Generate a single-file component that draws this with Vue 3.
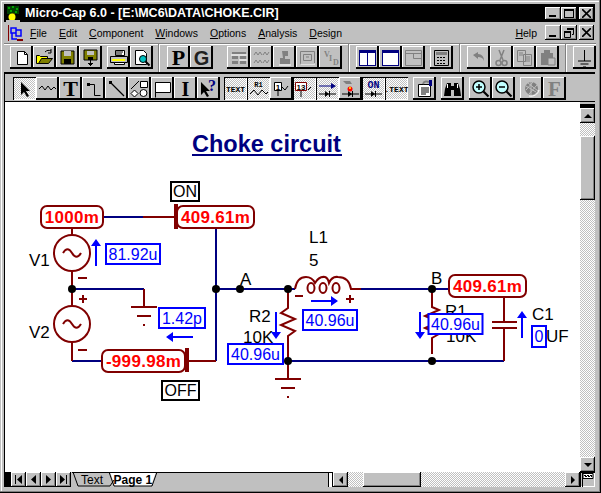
<script setup>
const k = '#000', g = '#808080', w = '#fff', ol = '#808000', nv = '#000080'
const ser = `font-family="Liberation Serif" font-weight="bold"`
const san = `font-family="Liberation Sans" font-weight="bold"`
const floppy = (c) => `<path d="M5 5h13v13H5z" fill="${c}" stroke="${k}"/><path d="M8 5h7v5H8z" fill="#c0c0c0"/><path d="M8 13h7v5H8z" fill="${k}"/>`
const floppy2 = `<path d="M5 4h13v10H5z" fill="${ol}" stroke="${k}"/><path d="M8 5h7v4H8z" fill="#c0c0c0"/><path d="M9 11h5v3H9z" fill="${k}"/><path d="M11 14h1v3h-1zM9 17h5v1H9zM10 18h3v1h-3zM11 19h1v1h-1z" fill="${k}"/>`
const row1 = [
  [{ i: `<path d="M7.5 5.5h7l3 3v10h-10z" fill="${w}" stroke="${k}"/><path d="M14.5 5.5v3h3" fill="none" stroke="${k}"/>` },
   { i: `<path d="M3.5 9.5h3l1 1h7v7h-11z" fill="#ffff00" stroke="${k}"/><path d="M5.5 17.5l3-5h11l-4 5z" fill="${ol}" stroke="${k}"/><path d="M12 6c2-2 4-2 6-1" fill="none" stroke="${k}"/><path d="M18 3v4h-3" fill="none" stroke="${k}"/>` },
   { i: floppy(ol) }, { i: floppy2 }],
  [{ i: `<path d="M8.5 4.5h9v5h-9z" fill="${w}" stroke="${k}"/><path d="M3.5 10.5h17v6h-17z" fill="#c0c0c0" stroke="${k}"/><path d="M5 13h13v2H5z" fill="#ffff00"/><path d="M7.5 16.5h10v2h-10z" fill="${w}" stroke="${k}"/><path d="M9 6h7M8 8h7" stroke="${k}"/>` },
   { i: `<path d="M5.5 4.5h8l3 3v11h-11z" fill="${w}" stroke="${k}"/><circle cx="13" cy="13" r="3.5" fill="#00c0c0" stroke="${k}"/><path d="M15.5 15.5l4 4" stroke="${k}" stroke-width="2"/>` }],
  [{ i: `<text x="11.5" y="19" text-anchor="middle" font-size="22" ${ser} fill="${k}">P</text>` },
   { i: `<text x="11.5" y="18.5" text-anchor="middle" font-size="20" ${san} fill="#202020">G</text>` }],
  [{ i: `<path d="M5 6h14v2H5zM5 10h6v3H5zM13 10h6v3h-6zM5 15h6v3H5zM13 15h6v3h-6z" fill="${g}"/><path d="M4 9h16M12 14h8" stroke="${w}"/>` },
   { i: `<path d="M4 9l2-3 2 3 2-3 2 3M13 9l2-3 2 3 2-3M4 17l2-3 2 3 2-3 2 3M13 17l2-3 2 3 2-3" fill="none" stroke="${g}"/>` },
   { i: `<path d="M9 5h6v5h-3v3h5v5H7v-6h3z" fill="${g}"/><path d="M6 19h12" stroke="${w}"/>` },
   { i: `<path d="M4.5 5.5h14v12h-14zM7.5 8.5h8v6h-8z" fill="none" stroke="${g}"/><path d="M10 11h3" stroke="${g}"/><path d="M5 18h14" stroke="${w}"/>` },
   { i: `<text x="5" y="11" font-size="8" ${ser} fill="${g}">V</text><text x="10" y="15" font-size="8" ${ser} fill="${g}">I</text><text x="14" y="19" font-size="8" ${ser} fill="${g}">D</text>` }],
  [{ i: `<path d="M3.5 4.5h16v15h-16z" fill="${w}" stroke="${nv}"/><path d="M3 4h17v3H3z" fill="${nv}"/><path d="M11 4h1v16h-1zM3 4h1v16H3zM19 4h1v16h-1zM3 19h17v1H3z" fill="${nv}"/>` },
   { i: `<path d="M3.5 4.5h16v15h-16z" fill="${w}" stroke="${nv}"/><path d="M3 4h17v3H3zM3 4h1v16H3zM19 4h1v16h-1zM3 19h17v1H3z" fill="${nv}"/>` },
   { i: `<path d="M3.5 4.5h16v15h-16zM3.5 7.5h16M11.5 7.5v5h8" fill="none" stroke="${g}"/>` }],
  [{ i: `<path d="M4.5 4.5h14v15h-14z" fill="#c0c0c0" stroke="${k}"/><path d="M6 6h11v3H6z" fill="${g}"/><path d="M7 11h2v1H7zM10 11h2v1h-2zM13 11h2v1h-2zM7 14h2v1H7zM10 14h2v1h-2zM13 14h2v1h-2zM7 17h2v1H7zM10 17h2v1h-2zM13 17h2v1h-2z" fill="${k}"/>` }],
  [{ i: `<path d="M6 9l5-3v2c4 0 6 3 6 7-1-3-3-4-6-4v2z" fill="${g}"/>` },
   { i: `<circle cx="8.5" cy="17" r="2.5" fill="none" stroke="${g}" stroke-width="1.5"/><circle cx="14.5" cy="17" r="2.5" fill="none" stroke="${g}" stroke-width="1.5"/><path d="M9 4l4 10M14 4l-4 10" stroke="${g}" stroke-width="1.5"/>` },
   { i: `<path d="M4.5 4.5h8v11h-8zM10.5 8.5h8v11h-8z" fill="#c0c0c0" stroke="${g}"/><path d="M12 11h5M12 13h5M12 15h5M6 7h4M6 9h4" stroke="${g}"/>` },
   { i: `<path d="M5 7h12v12H5z" fill="${g}"/><path d="M8 4h6v3H8z" fill="${g}"/><path d="M12 12h7v7h-7z" fill="#c0c0c0" stroke="${g}"/>` }],
  [{ i: `<path d="M11.5 4v11M5 15h13M7.5 18h8M10 21h3" stroke="${k}" stroke-width="1" fill="none"/>` }],
]
const row2 = [
  [{ p: 1, i: `<path d="M8 5v13l3-3 3 5 2-1-3-5h4z" fill="${k}"/>` },
   { i: `<path d="M3 12l3-3 3 4 3-4 3 4 3-3 2 2" fill="none" stroke="${k}"/>` },
   { i: `<text x="11.5" y="19" text-anchor="middle" font-size="22" ${ser} fill="${k}">T</text>` },
   { i: `<path d="M5 6h3v3H5z" fill="${k}"/><path d="M8 7.5h4.500v11h6" fill="none" stroke="${k}" stroke-width="1"/>` },
   { i: `<path d="M4 4h3v3H4z" fill="${k}"/><path d="M6 6l13 13" stroke="${k}" stroke-width="1.2"/>` },
   { i: `<path d="M3 12l8-8" stroke="${k}"/><path d="M12.500 4.500h7v6h-7z" fill="${w}" stroke="${k}"/><circle cx="15.500" cy="16" r="3.500" fill="${w}" stroke="${k}"/><path d="M6.500 13l3.500 3.500-3.500 3.500-3.500-3.500z" fill="${w}" stroke="${k}"/>` },
   { i: `<path d="M4.500 5.500h15v10h-15z" fill="${w}" stroke="${k}"/><path d="M4.500 5.500v15" stroke="${k}"/>` },
   { i: `<text x="11.500" y="19" text-anchor="middle" font-size="20" ${ser} fill="${k}">I</text>` },
   { i: `<path d="M4 5v13l3-3 3 5 2-1-3-5h4z" fill="${k}"/><text x="11" y="14" font-size="16" ${ser} fill="${nv}">?</text>` }],
  [{ p: 1, i: `<text x="11.500" y="15" text-anchor="middle" font-size="8" font-family="Liberation Mono" font-weight="bold" fill="${k}">TEXT</text>` },
   { p: 1, i: `<text x="11.500" y="10" text-anchor="middle" font-size="7" font-family="Liberation Mono" font-weight="bold" fill="${k}">R1</text><path d="M3 17l4-4 4 5 4-5 4 4 2-2" fill="none" stroke="${k}"/>` },
   { i: `<path d="M4.500 5.500h7v8h-7z" fill="${w}" stroke="${k}"/><text x="8" y="12.500" text-anchor="middle" font-size="8" ${san} fill="${k}">1</text><path d="M8 13v6M12 10l3 3 3-4" fill="none" stroke="${k}"/>` },
   { p: 1, i: `<path d="M2.500 5.500h11v8h-11z" fill="${w}" stroke="#800000"/><text x="8" y="12.500" text-anchor="middle" font-size="8" ${san} fill="${k}">13</text><path d="M8 14v6M15 13l3-3" fill="none" stroke="${k}"/>` },
   { p: 1, i: `<path d="M3 9h13" stroke="${nv}"/><path d="M15 6l5 3-5 3z" fill="${nv}"/><path d="M3 17h17" stroke="${k}"/><path d="M9 14l4 3-4 3zM13 14h1v6h-1z" fill="${k}"/>` },
   { i: `<path d="M4 4h7l2 3H7z" fill="${g}"/><circle cx="11" cy="12" r="2.500" fill="#ff0000"/><circle cx="11" cy="11" r="1" fill="#ffff00"/><path d="M3 17h17" stroke="${k}"/><path d="M9 14l4 3-4 3zM13 14h1v6h-1z" fill="${k}"/>` },
   { p: 1, i: `<text x="11.500" y="11" text-anchor="middle" font-size="10" font-family="Liberation Mono" font-weight="bold" fill="${nv}">ON</text><path d="M3 17h17" stroke="${k}"/><path d="M9 14l4 3-4 3zM13 14h1v6h-1z" fill="${k}"/>` },
   { p: 1, i: `<text x="11.500" y="15" text-anchor="middle" font-size="8" font-family="Liberation Mono" font-weight="bold" fill="${k}">.TEXT</text>` }],
  [{ i: `<path d="M5.500 7.500h12v12h-12z" fill="${w}" stroke="${k}"/><path d="M8 11h8M8 13h8M8 15h8M8 17h5" stroke="${k}"/><path d="M10 7c1-3 4-3 6-2" fill="none" stroke="${g}" stroke-width="2"/><path d="M16 3h3v6h-3z" fill="${nv}"/>` }],
  [{ i: `<path d="M4 12l2-6h4v13H3zM19 12l-2-6h-4v13h7z" fill="${k}"/><path d="M10 9h3v4h-3z" fill="${k}"/><path d="M6 7h1v4H6zM16 7h1v4h-1z" fill="${w}"/>` }],
  [{ i: `<circle cx="10" cy="10" r="6" fill="#c0ffff" stroke="${k}" stroke-width="1.500"/><path d="M7 10h6M10 7v6" stroke="${k}" stroke-width="1.500"/><path d="M14.500 14.500l5 5" stroke="${k}" stroke-width="2.200"/>` },
   { i: `<circle cx="10" cy="10" r="6" fill="#c0ffff" stroke="${k}" stroke-width="1.500"/><path d="M7 10h6" stroke="${k}" stroke-width="1.500"/><path d="M14.500 14.500l5 5" stroke="${k}" stroke-width="2.200"/>` }],
  [{ i: `<circle cx="11.500" cy="11.500" r="6.500" fill="${g}"/><path d="M6 9l10 6M8 6l10 8M11 5v13M6 13l7-8M9 17l8-9" stroke="#c0c0c0"/><path d="M9 19c5 1 9-2 10-6" fill="none" stroke="${w}"/>` },
   { i: `<text x="11.500" y="19" text-anchor="middle" font-size="21" ${ser} fill="${g}">F</text>` }],
]
</script>

<template>
  <div class="window">
    <header class="titlebar">
      <svg class="appicon" width="16" height="17" viewBox="0 0 16 17">
        <path d="M2 1h12v8H2z" fill="#004000" />
        <path d="M3 2h2v2H3zM7 1h2v2H7zM11 3h2v2h-2zM5 5h2v2H5zM10 6h2v2h-2z" fill="#00a000" />
        <path d="M7 8h3v8H7z" fill="#404000" />
        <circle cx="7" cy="12" r="3.500" fill="#ffff00" />
        <path d="M1 15h14v2H1z" fill="#c0c0c0" />
      </svg>
      <span class="apptitle">Micro-Cap 6.0 - [E:\MC6\DATA\CHOKE.CIR]</span>
      <div class="capbtns">
        <button class="cap"><i class="minglyph"></i></button>
        <button class="cap"><i class="maxglyph"></i></button>
        <button class="cap close"><svg width="9" height="9" viewBox="0 0 9 9"><path d="M0 0l9 9M9 0l-9 9" stroke="#000" stroke-width="1.600" /></svg></button>
      </div>
    </header>

    <nav class="menubar">
      <svg class="docicon" width="16" height="16" viewBox="0 0 16 16">
        <path d="M0 0h16v16H0z" fill="#c0c0c0" />
        <path d="M3 3h5v5H3zM8 5h5v6H8zM4 8v6h5" fill="none" stroke="#0000ff" stroke-width="1.500" />
        <path d="M0 0h1v16H0zM9 14h6v2H9z" fill="#800000" />
      </svg>
      <span class="mi m-file"><u>F</u>ile</span>
      <span class="mi m-edit"><u>E</u>dit</span>
      <span class="mi m-comp"><u>C</u>omponent</span>
      <span class="mi m-win"><u>W</u>indows</span>
      <span class="mi m-opt"><u>O</u>ptions</span>
      <span class="mi m-ana"><u>A</u>nalysis</span>
      <span class="mi m-des"><u>D</u>esign</span>
      <span class="mi m-help"><u>H</u>elp</span>
      <div class="capbtns low">
        <button class="cap tall"><i class="minglyph"></i></button>
        <button class="cap tall"><svg width="10" height="10" viewBox="0 0 10 10"><path d="M3 .500h6.500v6H8M.500 3.500h6v6h-6z" fill="none" stroke="#000" /><path d="M3 0h7v2H3zM0 3h7v2H0z" /></svg></button>
        <button class="cap tall close"><svg width="9" height="9" viewBox="0 0 9 9"><path d="M0 0l9 9M9 0l-9 9" stroke="#000" stroke-width="1.600" /></svg></button>
      </div>
    </nav>

    <div class="band1">
      <div class="seg seg1">
        <div class="tbgroup" v-for="(grp, a) in row1.slice(0, 2)" :key="a">
          <button v-for="(b, n) in grp" :key="n" class="tb"><svg width="23" height="23" viewBox="0 0 23 23" v-html="b.i"></svg></button>
        </div>
      </div>
      <div class="seg seg2">
        <div class="tbgroup" v-for="(grp, a) in row1.slice(2, 4)" :key="a">
          <button v-for="(b, n) in grp" :key="n" class="tb"><svg width="23" height="23" viewBox="0 0 23 23" v-html="b.i"></svg></button>
        </div>
      </div>
      <div class="seg seg3">
        <div class="tbgroup" v-for="(grp, a) in row1.slice(4, 6)" :key="a">
          <button v-for="(b, n) in grp" :key="n" class="tb"><svg width="23" height="23" viewBox="0 0 23 23" v-html="b.i"></svg></button>
        </div>
      </div>
      <div class="seg seg4">
        <div class="tbgroup">
          <button v-for="(b, n) in row1[6]" :key="n" class="tb"><svg width="23" height="23" viewBox="0 0 23 23" v-html="b.i"></svg></button>
        </div>
      </div>
      <div class="seg seg5">
        <div class="tbgroup">
          <button v-for="(b, n) in row1[7]" :key="n" class="tb"><svg width="23" height="23" viewBox="0 0 23 23" v-html="b.i"></svg></button>
        </div>
      </div>
    </div>

    <div class="child">
      <div class="band2">
        <div class="tbgroup" v-for="(grp, a) in row2" :key="a">
          <button v-for="(b, n) in grp" :key="n" class="tb" :class="{ pressed: b.p }"><svg width="23" height="23" viewBox="0 0 23 23" v-html="b.i"></svg></button>
        </div>
      </div>

      <div class="client">
        <div class="canvas">
          <svg class="schematic" width="575" height="370" viewBox="5 102 575 370">
            <text x="192" y="152" class="heading">Choke circuit</text>
            <path d="M192 155h150" stroke="#000080" stroke-width="2" />

            <g fill="none" stroke="#000080" stroke-width="2">
              <path d="M103 217h40M72 289h72M216 228v133M216 289h79M72 361h30M361 289h88M288 361h216" />
            </g>
            <g fill="none" stroke="#800000" stroke-width="2">
              <path d="M143 217h32M72 228v7M72 271v36M72 342v19M189 361h27" />
              <path d="M144 289v18M131 307h26M137 316h14M143 325h2" />
              <path d="M288 361v18M275 379h26M281 388h14M287 397h2" />
              <circle cx="72" cy="253" r="18" />
              <circle cx="72" cy="324" r="18" />
              <path d="M63 253c3-5 6-5 9 0s6 5 9 0" />
              <path d="M63 324c3-5 6-5 9 0s6 5 9 0" />
              <path d="M288 289v19l-7 5 14 6-14 6 14 6-7 5v25" />
              <path d="M432 289v18l7 3-14 6 14 6-14 6 14 6-7 4v16" />
              <path d="M504 297v25M492 322h25M492 328h25M504 328v33" />
              <path d="M295 289Q297 277 306 277Q312 277 315 283Q319 276 325 277Q328 278 329 283Q332 276 338 277Q349 277 351 289h10" />
              <ellipse cx="311" cy="288" rx="3.500" ry="5" />
              <ellipse cx="323" cy="288" rx="3.500" ry="5" />
              <ellipse cx="336" cy="288" rx="3.500" ry="5" />
              <path d="M78 278h9M79 299h8M83 295v8M78 350h9M295 296h8M346 299h8M350 295v8" />
              <path d="M176 204v25M187 348v24" stroke-width="4" />
            </g>

            <g fill="#000">
              <circle cx="72" cy="289" r="4" /><circle cx="216" cy="289" r="4" /><circle cx="240" cy="289" r="4" />
              <circle cx="288" cy="289" r="4" /><circle cx="288" cy="361" r="4" /><circle cx="432" cy="289" r="4" /><circle cx="432" cy="361" r="4" />
            </g>

            <g class="lbl">
              <text x="29" y="266">V1</text><text x="29" y="338">V2</text><text x="240" y="285">A</text>
              <text x="309" y="243">L1</text><text x="309" y="266">5</text><text x="431" y="284">B</text>
              <text x="249" y="322">R2</text><text x="243" y="343">10K</text>
              <text x="445" y="317">R1</text><text x="446" y="342">10K</text>
              <text x="532" y="320">C1</text><text x="546" y="342">UF</text>
            </g>

            <g fill="#0000ff" stroke="none">
              <path d="M95 266h2v-20h4l-5-7-5 7h4z" />
              <path d="M193 336v2h-20v4l-7-5 7-5v4z" />
              <path d="M275 312h2v20h4l-5 7-5-7h4z" />
              <path d="M311 300v2h20v4l7-5-7-5v4z" />
              <path d="M419 312h2v20h4l-5 7-5-7h4z" />
              <path d="M521 338h2v-20h4l-5-7-5 7h4z" />
            </g>

            <g class="probe">
              <rect x="106" y="244" width="54" height="20" /><text x="133" y="260">81.92u</text>
              <rect x="159" y="308" width="46" height="20" /><text x="182" y="324">1.42p</text>
              <rect x="228" y="344" width="55" height="20" /><text x="255.500" y="360">40.96u</text>
              <rect x="303" y="310" width="54" height="20" /><text x="330" y="326">40.96u</text>
              <rect x="428.500" y="314" width="54" height="20" /><text x="455.500" y="330">40.96u</text>
              <rect x="532" y="326" width="14" height="21" /><text x="539" y="342">0</text>
            </g>

            <g class="volt">
              <rect x="41" y="206" width="62" height="22" rx="6" /><text x="72" y="223">1000m</text>
              <rect x="177" y="206" width="77" height="22" rx="6" /><text x="215.500" y="223">409.61m</text>
              <rect x="102" y="350" width="83" height="22" rx="6" /><text x="143.500" y="367">-999.98m</text>
              <rect x="449" y="275" width="77" height="22" rx="6" /><text x="487.500" y="292">409.61m</text>
            </g>

            <g class="tag">
              <rect x="171" y="182" width="28" height="19" /><text x="185" y="197">ON</text>
              <rect x="162" y="381" width="37" height="19" /><text x="180.500" y="396">OFF</text>
            </g>
          </svg>
        </div>
        <aside class="vscroll">
          <div class="vgap"></div>
          <div class="vcap"></div>
          <button class="sb up"><i class="tri-up"></i></button>
          <div class="track v1"></div>
          <div class="thumb vthumb"></div>
          <div class="track vfill"></div>
          <button class="sb"><i class="tri-down"></i></button>
        </aside>
      </div>

      <footer class="statusrow">
        <div class="blackcap"></div>
        <button class="nav" v-for="(n, idx) in ['first', 'prev', 'next', 'last']" :key="idx">
          <svg width="15" height="15" viewBox="0 0 15 15">
            <path v-if="n === 'first'" d="M4 3h1v9H4zM11 3v9L6 7.500z" />
            <path v-if="n === 'prev'" d="M10 3v9L5 7.500z" />
            <path v-if="n === 'next'" d="M5 3v9l5-4.500z" />
            <path v-if="n === 'last'" d="M10 3h1v9h-1zM4 3v9l5-4.500z" />
          </svg>
        </button>
        <svg class="tabs" width="87" height="15" viewBox="0 0 87 15">
          <path d="M1 0l5 13h31l3 -5L37 0z" fill="#c0c0c0" />
          <path d="M38 0l5 14h36L84 0z" fill="#fff" />
          <path d="M1 0l5 14h32l4-6M37 0l5 14h38l5-14M0 0.500h87" fill="none" stroke="#000" />
          <text x="9" y="12" class="tab">Text</text>
          <text x="41.500" y="12" class="tab on">Page 1</text>
        </svg>
        <div class="tabrest"></div>
        <div class="splitter"></div>
        <button class="sb"><i class="tri-left"></i></button>
        <div class="track hleft"></div>
        <div class="thumb hthumb"></div>
        <div class="track hfill"></div>
        <button class="sb"><i class="tri-right"></i></button>
        <div class="flagbox">
          <svg width="15" height="15" viewBox="0 0 15 15"><path d="M2.500 1v14" stroke="#000" /><path d="M3 1.500h10v5H3z" fill="#fff" stroke="#000" /><path d="M4 3h2v1H4zM7 3h2v1H7zM10 3h2v1h-2zM5 4h2v1H5zM8 4h2v1H8zM11 4h1v1h-1z" /></svg>
        </div>
      </footer>
    </div>
  </div>
</template>

<style>
html, body { margin: 0; background: #c0c0c0; }
</style>

<style scoped>
* { box-sizing: border-box; }
.window {
  width: 601px;
  height: 493px;
  background: #c0c0c0;
  padding: 4px 6px 0 4px;
  display: flex;
  flex-direction: column;
  font-family: "Liberation Sans", Arial, sans-serif;
  box-shadow: inset -1px -1px 0 #000, inset -2px -2px 0 #808080, inset 1px 1px 0 #c0c0c0, inset 2px 2px 0 #fff;
  overflow: hidden;
}
button { padding: 0; margin: 0; border: 0; font: inherit; background: #c0c0c0; display: flex; align-items: center; justify-content: center; }
svg { display: block; }
.titlebar {
  height: 18px;
  background: #000;
  display: flex;
  align-items: center;
  color: #fff;
  flex: none;
}
.appicon { margin: 0 4px 0 1px; flex: none; }
.apptitle { font-weight: bold; font-size: 12.5px; white-space: nowrap; }
.capbtns { margin-left: auto; display: flex; gap: 0; padding-right: 1px; }
.cap {
  width: 16px; height: 13px;
  box-shadow: inset -1px -1px 0 #000, inset 1px 1px 0 #fff, inset -2px -2px 0 #808080;
  position: relative;
}
.cap.close { margin-left: 2px; width: 15px; }
.cap.tall { height: 15px; }
.minglyph { display: block; width: 7px; height: 2px; background: #000; margin-top: 6px; margin-right: 2px; }
.maxglyph { display: block; width: 10px; height: 9px; border: 1px solid #000; border-top-width: 2px; }
.menubar {
  height: 21px;
  display: flex;
  align-items: center;
  font-size: 10.5px;
  color: #000;
  flex: none;
}
.docicon { margin-left: 4px; flex: none; }
.mi { white-space: nowrap; }
.m-file { margin-left: 6px; }
.m-edit, .m-comp, .m-win, .m-opt, .m-ana, .m-des { margin-left: 12px; }
.m-help { margin-left: auto; margin-right: 8px; }
.capbtns.low { margin-left: 0; }
.band1 {
  height: 29px;
  flex: none;
  display: flex;
  border-top: 1px solid #808080;
  box-shadow: inset 0 1px 0 #fff;
  margin-right: -1px;
}
.seg { display: flex; gap: 5px; padding-top: 2px; border-right: 1px solid #808080; box-shadow: 1px 0 0 #fff; flex: none; }
.seg1 { width: 155px; padding-left: 6px; }
.seg2 { width: 190px; padding-left: 8px; gap: 14px; }
.seg3 { width: 111px; padding-left: 7px; }
.seg4 { width: 106px; padding-left: 7px; }
.seg5 { padding-left: 7px; border-right: 0; box-shadow: none; }
.tbgroup { display: flex; }
.tb {
  width: 23px; height: 23px; flex: none;
  box-shadow: inset -1px -1px 0 #000, inset -2px -2px 0 #000, inset 1px 1px 0 #fff;
}
.tb.pressed {
  background: repeating-conic-gradient(#fff 0 25%, #c0c0c0 0 50%) 0 0 / 2px 2px;
  box-shadow: inset 1px 1px 0 #000, inset -1px -1px 0 #fff;
}
.child {
  flex: 1;
  min-height: 0;
  display: flex;
  flex-direction: column;
  margin-bottom: 6px;
  border-top: 2px solid #000;
  border-left: 1px solid #000;
}
.band2 {
  height: 28px;
  flex: none;
  display: flex;
  gap: 5px;
  padding: 3px 0 0 8px;
  border-bottom: 1px solid #000;
  background: #c0c0c0;
}
.band2 .tbgroup:nth-child(2) { margin-left: -1px; }
.client { flex: 1; min-height: 0; display: flex; }
.canvas { flex: 1; min-width: 0; background: #fff; overflow: hidden; position: relative; }
.schematic { position: absolute; left: 0; top: 0; }
.heading { font: bold 23.5px "Liberation Sans", Arial, sans-serif; fill: #000080; }
.lbl text { font: 17px "Liberation Sans", Arial, sans-serif; fill: #000; }
.probe rect { fill: #fff; stroke: #0000ff; stroke-width: 2; }
.probe text { font: 16px "Liberation Sans", Arial, sans-serif; fill: #0000ff; text-anchor: middle; }
.volt rect { fill: #fff; stroke: #800000; stroke-width: 2; }
.volt text { font: bold 17px "Liberation Sans", Arial, sans-serif; fill: #ff0000; text-anchor: middle; letter-spacing: .3px; }
.tag rect { fill: #fff; stroke: #000; stroke-width: 2; }
.tag text { font: 16px "Liberation Sans", Arial, sans-serif; fill: #000; text-anchor: middle; }
.vscroll { width: 15px; flex: none; display: flex; flex-direction: column; }
.vgap { height: 2px; background: #c0c0c0; flex: none; }
.vcap { height: 4px; background: #000; flex: none; }
.sb {
  width: 15px; height: 15px; flex: none;
  box-shadow: inset -1px -1px 0 #000, inset 1px 1px 0 #fff, inset -2px -2px 0 #808080;
}
.track { background: repeating-conic-gradient(#fff 0 25%, #c0c0c0 0 50%) 0 0 / 2px 2px; }
.v1 { height: 13px; flex: none; }
.vfill { flex: 1; }
.thumb { background: #c0c0c0; box-shadow: inset -1px -1px 0 #000, inset 1px 1px 0 #fff, inset -2px -2px 0 #808080; flex: none; }
.vthumb { height: 64px; }
.tri-up { width: 0; height: 0; border: 4px solid transparent; border-bottom: 4px solid #000; border-top: 0; display: block; }
.tri-down { width: 0; height: 0; border: 4px solid transparent; border-top: 4px solid #000; border-bottom: 0; display: block; }
.tri-left { width: 0; height: 0; border: 4px solid transparent; border-right: 4px solid #000; border-left: 0; display: block; }
.tri-right { width: 0; height: 0; border: 4px solid transparent; border-left: 4px solid #000; border-right: 0; display: block; }
.statusrow { height: 15px; flex: none; display: flex; background: #c0c0c0; }
.blackcap { width: 6px; background: #000; flex: none; }
.nav {
  width: 15px; height: 15px; flex: none;
  background: #c0c0c0;
  box-shadow: inset -1px -1px 0 #000, inset 1px 1px 0 #fff, inset -2px -2px 0 #808080;
}
.tabs { flex: none; margin-left: 1px; }
.tab { font: 12px "Liberation Sans", Arial, sans-serif; fill: #000; }
.tab.on { font-weight: bold; }
.tabrest { width: 169px; flex: none; border-top: 1px solid #000; }
.splitter { width: 5px; flex: none; border-left: 1px solid #000; border-right: 1px solid #000; background: #fff; border-top: 1px solid #000; }
.hleft { width: 15px; flex: none; }
.hthumb { width: 58px; }
.hfill { flex: 1; }
.flagbox { width: 15px; height: 15px; flex: none; background: #c0c0c0; box-shadow: inset 1px 1px 0 #000, inset -1px -1px 0 #fff; }
</style>
